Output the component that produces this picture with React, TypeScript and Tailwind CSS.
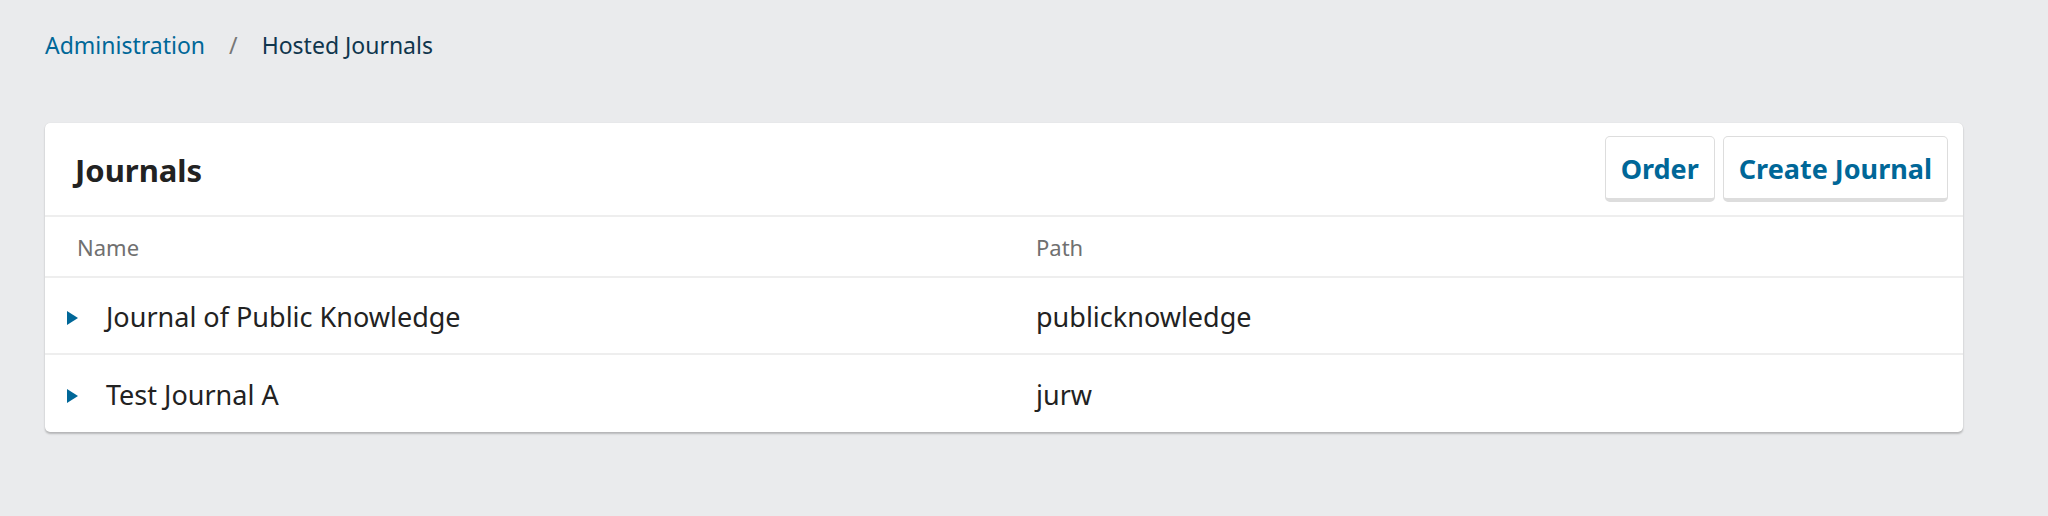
import { ReactNode } from "react";

const journals = [
  { name: "Journal of Public Knowledge", path: "publicknowledge" },
  { name: "Test Journal A", path: "jurw" },
];

function Button({ children }: { children: ReactNode }) {
  return (
    <button className="h-[66px] px-[15px] pt-[2px] rounded-[5px] border border-[#dddddd] border-b-[4px] bg-white text-[27px] font-bold text-[#006798] leading-none">
      {children}
    </button>
  );
}

function Caret() {
  return (
    <svg width="12" height="14" viewBox="0 0 12 14" className="shrink-0">
      <path d="M0 0 L11 7 L0 14 Z" fill="#006798" />
    </svg>
  );
}

export default function App() {
  return (
    <div
      className="min-h-[516px] w-full bg-[#eaebed] px-[45px] pt-[28px]"
      style={{ fontFamily: '"Noto Sans", "Open Sans", sans-serif' }}
    >
      {/* Breadcrumb */}
      <nav className="flex items-center h-[34px] text-[23px]">
        <a className="text-[#006798]">Administration</a>
        <span className="mx-[24px] text-[#777]">/</span>
        <span className="text-[#10364d]">Hosted Journals</span>
      </nav>

      {/* Panel */}
      <div className="mt-[61px] w-[1918px] bg-white rounded-[5px] shadow-[0_2px_2px_rgba(0,0,0,0.22),0_0_1px_rgba(0,0,0,0.15)]">
        <div className="flex items-center justify-between h-[94px] pl-[30px] pr-[15px] border-b-2 border-[#eeeeee]">
          <h2 className="pt-[2px] text-[31px] font-bold text-[#222]">Journals</h2>
          <div className="flex gap-[8px]">
            <Button>Order</Button>
            <Button>Create Journal</Button>
          </div>
        </div>

        <div className="grid grid-cols-2 h-[61px] pt-[2px] items-center border-b-2 border-[#eeeeee] text-[22px] text-[#707070]">
          <div className="pl-[32px]">Name</div>
          <div className="pl-[32px]">Path</div>
        </div>

        {journals.map((j, i) => (
          <div
            key={j.path}
            className={`grid grid-cols-2 h-[77px] pt-[4px] items-center text-[27px] text-[#222] ${
              i < journals.length - 1 ? "border-b-2 border-[#eeeeee]" : ""
            }`}
          >
            <div className="flex items-center pl-[22px] gap-[27px]">
              <Caret />
              <span>{j.name}</span>
            </div>
            <div className="pl-[32px]">{j.path}</div>
          </div>
        ))}
      </div>
    </div>
  );
}
